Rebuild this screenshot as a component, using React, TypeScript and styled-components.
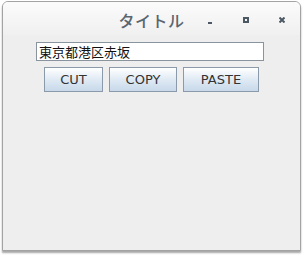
import styled, { createGlobalStyle } from 'styled-components';

const GlobalStyle = createGlobalStyle`
  html, body {
    margin: 0;
    padding: 0;
    background: #ffffff;
  }
  body {
    font-family: "DejaVu Sans", "Noto Sans CJK JP", sans-serif;
  }
`;

const Screen = styled.div`
  width: 303px;
  height: 255px;
  padding: 1px 2px 0 2px;
  box-sizing: border-box;
`;

const Window = styled.div`
  width: 299px;
  height: 250px;
  box-sizing: border-box;
  border: 1px solid #a3a3a3;
  border-radius: 6px 6px 0 0;
  background: #eeeeee;
  box-shadow: 0 2px 2px rgba(0, 0, 0, 0.35);
  display: flex;
  flex-direction: column;
  overflow: hidden;
`;

const TitleBar = styled.div`
  height: 33px;
  display: grid;
  grid-template-columns: 1fr auto 1fr;
  align-items: center;
  background: linear-gradient(#fbfbfb, #f0f0f0);
`;

const Title = styled.div`
  grid-column: 2;
  font-family: "Noto Sans CJK JP", sans-serif;
  font-size: 16px;
  font-weight: 500;
  color: #5a6570;
  letter-spacing: 0.5px;
  padding-top: 2px;
`;

const Controls = styled.div`
  grid-column: 3;
  display: flex;
  justify-content: flex-end;
  padding-top: 3px;
`;

const ControlCell = styled.div`
  width: 36px;
  height: 16px;
  display: flex;
  align-items: center;
  justify-content: center;
`;

const Minimize = styled.div`
  width: 4px;
  height: 2px;
  margin-top: 6px;
  background: #4c5864;
`;

const Maximize = styled.div`
  width: 6px;
  height: 6px;
  box-sizing: border-box;
  border: 2px solid #4c5864;
`;

const Body = styled.div`
  flex: 1;
  display: flex;
  flex-direction: column;
  align-items: center;
  padding-top: 7px;
  gap: 6px;
`;

const TextField = styled.input`
  width: 228px;
  height: 19px;
  box-sizing: border-box;
  margin: 0 0 0 -3px;
  padding: 0 2px;
  border: 1px solid #8a949e;
  background: #ffffff;
  font-family: "Noto Sans CJK JP", sans-serif;
  font-size: 13px;
  color: #111111;
  outline: none;
`;

const ButtonRow = styled.div`
  display: flex;
  gap: 6px;
`;

const Button = styled.button<{ $width: number }>`
  width: ${({ $width }) => $width}px;
  height: 25px;
  box-sizing: border-box;
  padding: 0;
  border: 1px solid #8a9aab;
  background: linear-gradient(#ffffff, #dde8f3 55%, #c8d9ea);
  font-family: "DejaVu Sans", sans-serif;
  font-size: 13px;
  color: #333333;
`;

export default function App() {
  return (
    <Screen>
      <GlobalStyle />
      <Window>
        <TitleBar>
          <Title>タイトル</Title>
          <Controls>
            <ControlCell>
              <Minimize />
            </ControlCell>
            <ControlCell>
              <Maximize />
            </ControlCell>
            <ControlCell>
              <svg width="6" height="6" viewBox="0 0 6 6">
                <path d="M0.5 0.5 L5.5 5.5 M5.5 0.5 L0.5 5.5" stroke="#4c5864" strokeWidth="2" />
              </svg>
            </ControlCell>
          </Controls>
        </TitleBar>
        <Body>
          <TextField defaultValue="東京都港区赤坂" />
          <ButtonRow>
            <Button $width={59}>CUT</Button>
            <Button $width={68}>COPY</Button>
            <Button $width={76}>PASTE</Button>
          </ButtonRow>
        </Body>
      </Window>
    </Screen>
  );
}
